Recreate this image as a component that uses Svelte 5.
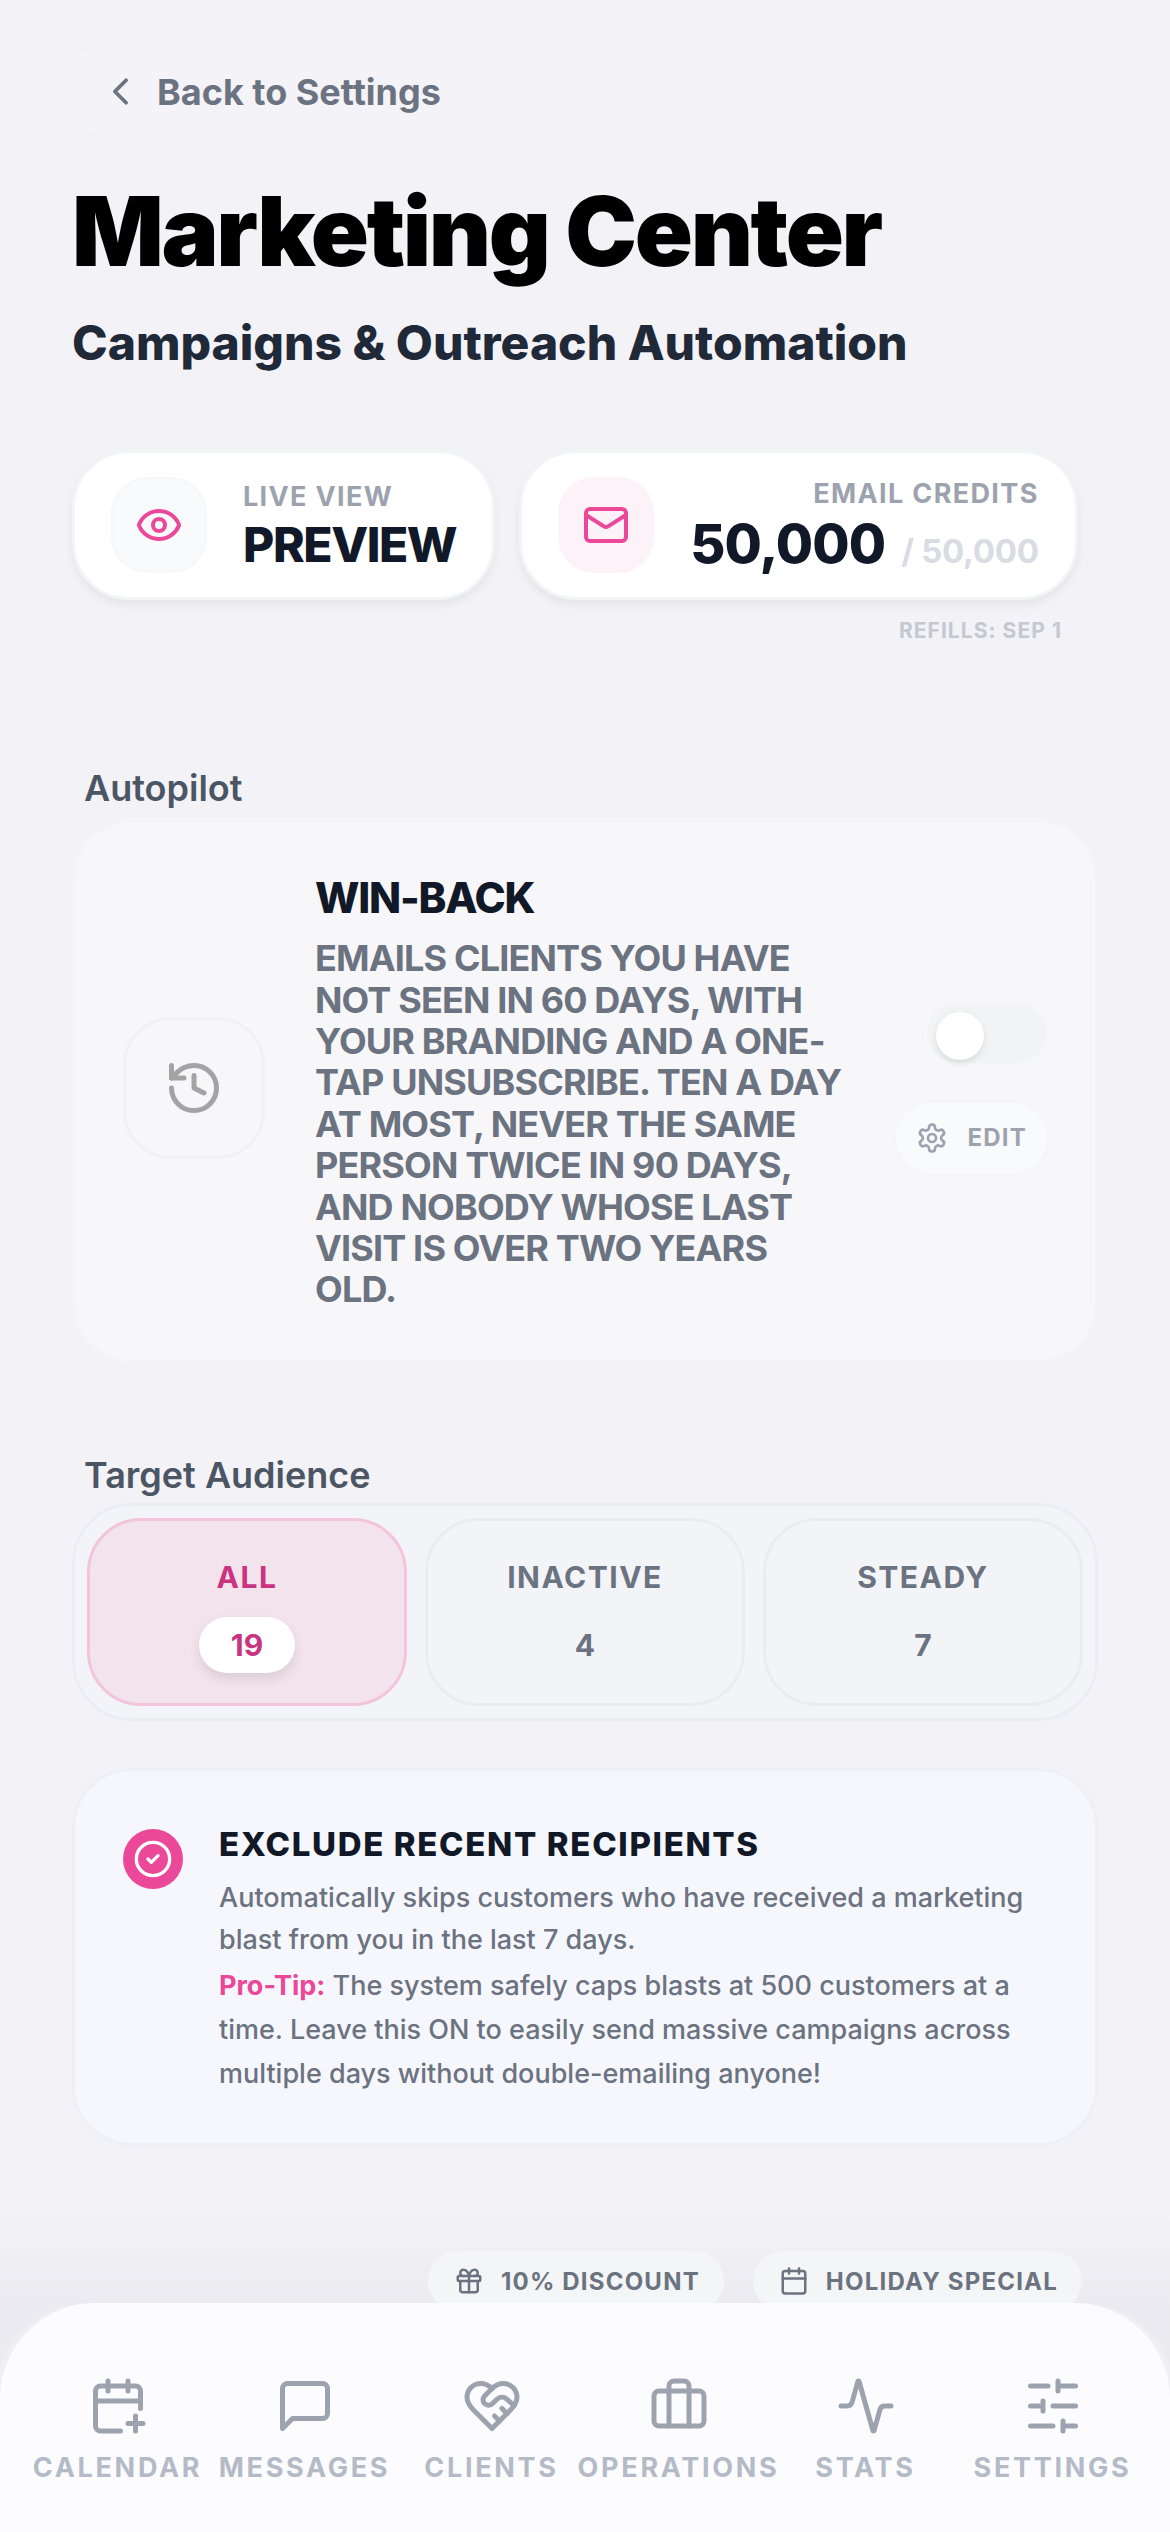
<script>
  const audience = [
    { label: 'ALL', count: 19, active: true },
    { label: 'INACTIVE', count: 4 },
    { label: 'STEADY', count: 7 }
  ];
  const nav = ['CALENDAR', 'MESSAGES', 'CLIENTS', 'OPERATIONS', 'STATS', 'SETTINGS'];
</script>

<div class="page">
  <button class="back" type="button">
    <svg viewBox="0 0 24 24" class="ico back-ico"><path d="m15 18-6-6 6-6" /></svg>
    <span>Back to Settings</span>
  </button>

  <h1>Marketing Center</h1>
  <p class="subtitle">Campaigns &amp; Outreach Automation</p>

  <div class="stats">
    <div class="stat">
      <div class="tile">
        <svg viewBox="0 0 24 24" class="ico pink">
          <path d="M2.062 12.348a1 1 0 0 1 0-.696 10.75 10.75 0 0 1 19.876 0 1 1 0 0 1 0 .696 10.75 10.75 0 0 1-19.876 0" />
          <circle cx="12" cy="12" r="3" />
        </svg>
      </div>
      <div class="stat-text">
        <span class="stat-label">LIVE VIEW</span>
        <strong class="stat-value">PREVIEW</strong>
      </div>
    </div>
    <div class="stat">
      <div class="tile tile-pink">
        <svg viewBox="0 0 24 24" class="ico pink">
          <rect x="2" y="4" width="20" height="16" rx="2" />
          <path d="m22 7-8.97 5.7a1.94 1.94 0 0 1-2.06 0L2 7" />
        </svg>
      </div>
      <div class="stat-text right">
        <span class="stat-label">EMAIL CREDITS</span>
        <div class="credits"><strong>50,000</strong><span>/ 50,000</span></div>
      </div>
    </div>
  </div>
  <p class="refills">REFILLS: SEP 1</p>

  <h2 class="autopilot-head">Autopilot</h2>
  <section class="auto">
    <div class="auto-icon">
      <svg viewBox="0 0 24 24" class="ico">
        <path d="M3 12a9 9 0 1 0 9-9 9.75 9.75 0 0 0-6.74 2.74L3 8" />
        <path d="M3 3v5h5" />
        <path d="M12 7v5l4 2" />
      </svg>
    </div>
    <div class="auto-text">
      <h3>WIN-BACK</h3>
      <p>Emails clients you have not seen in 60 days, with your branding and a one-tap unsubscribe. Ten a day at most, never the same person twice in 90 days, and nobody whose last visit is over two years old.</p>
    </div>
    <div class="auto-side">
      <div class="toggle"><span class="knob"></span></div>
      <button class="edit" type="button">
        <svg viewBox="0 0 24 24" class="ico">
          <path d="M12.22 2h-.44a2 2 0 0 0-2 2v.18a2 2 0 0 1-1 1.73l-.43.25a2 2 0 0 1-2 0l-.15-.08a2 2 0 0 0-2.73.73l-.22.38a2 2 0 0 0 .73 2.73l.15.1a2 2 0 0 1 1 1.72v.51a2 2 0 0 1-1 1.74l-.15.09a2 2 0 0 0-.73 2.73l.22.38a2 2 0 0 0 2.73.73l.15-.08a2 2 0 0 1 2 0l.43.25a2 2 0 0 1 1 1.73V20a2 2 0 0 0 2 2h.44a2 2 0 0 0 2-2v-.18a2 2 0 0 1 1-1.73l.43-.25a2 2 0 0 1 2 0l.15.08a2 2 0 0 0 2.73-.73l.22-.39a2 2 0 0 0-.73-2.73l-.15-.08a2 2 0 0 1-1-1.74v-.5a2 2 0 0 1 1-1.74l.15-.09a2 2 0 0 0 .73-2.73l-.22-.38a2 2 0 0 0-2.73-.73l-.15.08a2 2 0 0 1-2 0l-.43-.25a2 2 0 0 1-1-1.73V4a2 2 0 0 0-2-2z" />
          <circle cx="12" cy="12" r="3" />
        </svg>
        <span>EDIT</span>
      </button>
    </div>
  </section>

  <h2 class="audience-head">Target Audience</h2>
  <div class="segments">
    {#each audience as a}
      <div class="segment" class:active={a.active}>
        <span class="seg-label">{a.label}</span>
        <span class="seg-count">{a.count}</span>
      </div>
    {/each}
  </div>

  <section class="exclude">
    <div class="check">
      <svg viewBox="0 0 24 24" class="ico">
        <circle cx="12" cy="12" r="10" />
        <path d="m9 12 2 2 4-4" />
      </svg>
    </div>
    <div class="exclude-text">
      <h3>EXCLUDE RECENT RECIPIENTS</h3>
      <p>Automatically skips customers who have received a marketing blast from you in the last 7 days.</p>
      <p class="tip"><b>Pro-Tip:</b> The system safely caps blasts at 500 customers at a time. Leave this ON to easily send massive campaigns across multiple days without double-emailing anyone!</p>
    </div>
  </section>

  <div class="fade"></div>

  <div class="chips">
    <span class="chip">
      <svg viewBox="0 0 24 24" class="ico">
        <rect x="3" y="8" width="18" height="4" rx="1" />
        <path d="M12 8v13" />
        <path d="M19 12v7a2 2 0 0 1-2 2H7a2 2 0 0 1-2-2v-7" />
        <path d="M7.5 8a2.5 2.5 0 0 1 0-5A4.8 8 0 0 1 12 8a4.8 8 0 0 1 4.5-5 2.5 2.5 0 0 1 0 5" />
      </svg>
      10% DISCOUNT
    </span>
    <span class="chip">
      <svg viewBox="0 0 24 24" class="ico">
        <path d="M8 2v4" /><path d="M16 2v4" />
        <rect x="3" y="4" width="18" height="18" rx="2" />
        <path d="M3 10h18" />
      </svg>
      HOLIDAY SPECIAL
    </span>
  </div>

  <nav class="tabbar">
    {#each nav as label, i}
      <div class="tab">
        <svg viewBox="0 0 24 24" class="ico">
          {#if i === 0}
            <path d="M8 2v4" /><path d="M16 2v4" />
            <path d="M21 13V6a2 2 0 0 0-2-2H5a2 2 0 0 0-2 2v14a2 2 0 0 0 2 2h8" />
            <path d="M3 10h18" /><path d="M16 19h6" /><path d="M19 16v6" />
          {:else if i === 1}
            <path d="M21 15a2 2 0 0 1-2 2H7l-4 4V5a2 2 0 0 1 2-2h14a2 2 0 0 1 2 2z" />
          {:else if i === 2}
            <path d="M19 14c1.49-1.46 3-3.21 3-5.5A5.5 5.5 0 0 0 16.5 3c-1.76 0-3 .5-4.5 2-1.5-1.5-2.74-2-4.5-2A5.5 5.5 0 0 0 2 8.5c0 2.3 1.5 4.05 3 5.5l7 7Z" />
            <path d="M12 5 9.04 7.96a2.17 2.17 0 0 0 0 3.08c.82.82 2.13.85 3 .07l2.07-1.9a2.82 2.82 0 0 1 3.79 0l2.96 2.66" />
            <path d="m18 15-2-2" /><path d="m15 18-2-2" />
          {:else if i === 3}
            <path d="M16 20V4a2 2 0 0 0-2-2h-4a2 2 0 0 0-2 2v16" />
            <rect x="2" y="6" width="20" height="14" rx="2" />
          {:else if i === 4}
            <path d="M22 12h-2.48a2 2 0 0 0-1.93 1.46l-2.35 8.36a.25.25 0 0 1-.48 0L9.24 2.18a.25.25 0 0 0-.48 0l-2.35 8.36A2 2 0 0 1 4.49 12H2" />
          {:else}
            <path d="M21 4h-7M10 4H3M21 12h-9M8 12H3M21 20h-5M12 20H3M14 2v4M8 10v4M16 18v4" />
          {/if}
        </svg>
        <span>{label}</span>
      </div>
    {/each}
  </nav>
</div>

<style>
  :global(body) {
    margin: 0;
    background: #f2f2f7;
  }
  .page {
    position: relative;
    width: 1170px;
    height: 2532px;
    overflow: hidden;
    box-sizing: border-box;
    padding: 48px 72px 0;
    background: #f2f2f7;
    font-family: Inter, 'Liberation Sans', sans-serif;
    color: #111827;
  }
  h1, h2, h3, p {
    margin: 0;
  }
  button {
    font-family: inherit;
    border: none;
    padding: 0;
  }
  .ico {
    fill: none;
    stroke: currentColor;
    stroke-width: 2;
    stroke-linecap: round;
    stroke-linejoin: round;
    display: block;
    flex: none;
  }
  .pink {
    width: 48px;
    height: 48px;
    color: #ec4899;
  }

  .back {
    display: flex;
    align-items: center;
    gap: 14px;
    height: 84px;
    padding: 3px 36px 0;
    margin-left: -10px;
    border-radius: 42px;
    background: #f3f3f8;
    color: #6b7280;
    font-size: 36px;
    font-weight: 700;
  }
  .back-ico {
    width: 45px;
    height: 45px;
    color: #6b7280;
  }
  h1 {
    margin-top: 45px;
    font-size: 96px;
    line-height: 108px;
    font-weight: 900;
    letter-spacing: -2.35px;
    color: #000;
  }
  .subtitle {
    margin-top: 28px;
    font-size: 48px;
    line-height: 60px;
    font-weight: 800;
    color: #1f2937;
  }

  .stats {
    display: flex;
    gap: 24px;
    margin-top: 77px;
  }
  .stat {
    display: flex;
    align-items: center;
    height: 150px;
    box-sizing: border-box;
    padding: 0 36px;
    border-radius: 57px;
    background: #fff;
    border: 3px solid #f3f4f6;
    box-shadow: 0 5px 8px rgba(0, 0, 0, 0.06);
  }
  .tile {
    width: 96px;
    height: 96px;
    border-radius: 36px;
    background: #f9fafb;
    box-shadow: inset 0 0 6px rgba(0, 0, 0, 0.03);
    display: flex;
    align-items: center;
    justify-content: center;
    flex: none;
  }
  .tile-pink {
    background: #fdf2f8;
    box-shadow: none;
  }
  .stat-text {
    display: flex;
    flex-direction: column;
    margin-left: 36px;
  }
  .stat-text.right {
    align-items: flex-end;
  }
  .stat-label {
    font-size: 27px;
    line-height: 36px;
    font-weight: 700;
    letter-spacing: 1.35px;
    color: #9ca3af;
  }
  .stat-value {
    margin-top: 3px;
    font-size: 48px;
    line-height: 54px;
    font-weight: 800;
    letter-spacing: -1.4px;
    color: #111827;
  }
  .credits {
    display: flex;
    align-items: baseline;
    gap: 16px;
    margin-top: 2px;
  }
  .credits strong {
    font-size: 54px;
    line-height: 60px;
    font-weight: 800;
    letter-spacing: -0.9px;
  }
  .credits span {
    font-size: 33px;
    font-weight: 700;
    letter-spacing: -0.3px;
    color: #d9dce3;
  }
  .refills {
    margin-top: 16px;
    width: 990px;
    text-align: right;
    font-size: 21px;
    line-height: 30px;
    font-weight: 700;
    letter-spacing: 1.05px;
    color: #c4c8d0;
  }

  h2 {
    margin-left: 12px;
    font-size: 36px;
    line-height: 48px;
    font-weight: 600;
    color: #4b5563;
  }
  .autopilot-head {
    margin-top: 118px;
  }
  .auto {
    display: flex;
    align-items: center;
    margin-top: 7px;
    height: 544px;
    box-sizing: border-box;
    padding: 0 48px;
    border-radius: 60px;
    background: #f7f7fa;
    border: 3px solid #f4f4f8;
  }
  .auto-icon {
    width: 142px;
    height: 142px;
    margin-bottom: 6px;
    box-sizing: border-box;
    border-radius: 48px;
    border: 3px solid #f1f1f4;
    background: #f7f7fa;
    color: #a3a3a3;
    display: flex;
    align-items: center;
    justify-content: center;
    flex: none;
  }
  .auto-icon svg {
    width: 60px;
    height: 60px;
  }
  .auto-text {
    width: 530px;
    margin-left: 50px;
    flex: none;
  }
  .auto-text h3 {
    font-size: 42px;
    line-height: 54px;
    font-weight: 800;
    letter-spacing: -1.2px;
    color: #111827;
  }
  .auto-text p {
    margin-top: 13px;
    font-size: 36px;
    line-height: 41.4px;
    font-weight: 700;
    letter-spacing: -0.85px;
    text-transform: uppercase;
    color: #6b7280;
  }
  .auto-side {
    margin-left: auto;
    margin-bottom: 6px;
    display: flex;
    flex-direction: column;
    align-items: flex-end;
    gap: 39px;
  }
  .toggle {
    position: relative;
    width: 120px;
    height: 60px;
    border-radius: 30px;
    background: #f2f3f5;
  }
  .knob {
    position: absolute;
    left: 9px;
    top: 9px;
    width: 48px;
    height: 48px;
    border-radius: 50%;
    background: #fff;
    box-shadow: 0 3px 6px rgba(0, 0, 0, 0.1);
  }
  .edit {
    display: flex;
    align-items: center;
    gap: 20px;
    height: 72px;
    padding: 0 20px;
    border-radius: 36px;
    background: #f9fafb;
    box-shadow: 0 0 0 2px #f5f5f8;
    color: #9ca3af;
    font-size: 24px;
    font-weight: 700;
    letter-spacing: 1.2px;
  }
  .edit svg {
    width: 32px;
    height: 32px;
  }

  .audience-head {
    margin-top: 88px;
  }
  .segments {
    display: flex;
    gap: 18px;
    margin-top: 4px;
    padding: 12px;
    height: 218px;
    box-sizing: border-box;
    border-radius: 60px;
    border: 3px solid #ecedf2;
    background: #f3f4f8;
  }
  .segment {
    flex: 1;
    box-sizing: border-box;
    border-radius: 54px;
    border: 3px solid #ebecf0;
    display: flex;
    flex-direction: column;
    align-items: center;
    color: #6b7280;
  }
  .segment.active {
    background: #f3e3ed;
    border-color: #f2c5dc;
    color: #c9337f;
  }
  .seg-label {
    margin-top: 35px;
    font-size: 30px;
    line-height: 42px;
    font-weight: 700;
    letter-spacing: 1.5px;
  }
  .seg-count {
    margin-top: 19px;
    min-width: 36px;
    height: 56px;
    padding: 0 30px;
    border-radius: 28px;
    display: flex;
    align-items: center;
    justify-content: center;
    font-size: 30px;
    font-weight: 700;
  }
  .active .seg-count {
    background: #fff;
    box-shadow: 0 6px 12px rgba(0, 0, 0, 0.1);
  }

  .exclude {
    display: flex;
    gap: 36px;
    margin-top: 47px;
    height: 378px;
    box-sizing: border-box;
    padding: 52px 48px 0;
    border-radius: 60px;
    border: 3px solid #eff0f5;
    background: #f6f7fc;
  }
  .check {
    width: 60px;
    height: 60px;
    border-radius: 50%;
    background: #ec4899;
    color: #fff;
    display: flex;
    align-items: center;
    justify-content: center;
    flex: none;
    margin-top: 6px;
  }
  .check svg {
    width: 40px;
    height: 40px;
  }
  .exclude-text h3 {
    font-size: 33px;
    line-height: 42px;
    font-weight: 800;
    letter-spacing: 1.65px;
    color: #111827;
  }
  .exclude-text p {
    margin-top: 12px;
    font-size: 27px;
    line-height: 42px;
    font-weight: 500;
    color: #6b7280;
  }
  .exclude-text p.tip {
    margin-top: 3px;
    line-height: 44px;
  }
  .tip b {
    font-weight: 700;
    color: #ec4899;
  }

  .chips {
    position: relative;
    display: flex;
    justify-content: flex-end;
    gap: 29px;
    margin: 105px 16px 0 0;
  }
  .chip {
    display: flex;
    align-items: center;
    gap: 17px;
    height: 60px;
    padding: 0 24px 0 26px;
    border-radius: 30px;
    background: #f4f5f7;
    color: #6b7280;
    font-size: 24px;
    font-weight: 700;
    letter-spacing: 1.2px;
  }
  .chip svg {
    width: 30px;
    height: 30px;
  }

  .fade {
    position: absolute;
    left: 0;
    right: 0;
    top: 2215px;
    bottom: 0;
    background: linear-gradient(to bottom, rgba(40, 40, 50, 0), rgba(40, 40, 50, 0.035) 88px);
    pointer-events: none;
  }
  .tabbar {
    position: absolute;
    left: 0;
    right: 0;
    top: 2303px;
    bottom: 0;
    box-sizing: border-box;
    padding: 73px 24px 0;
    display: grid;
    grid-template-columns: repeat(6, minmax(0, 1fr));
    align-items: start;
    border-radius: 96px 96px 0 0;
    background: #fcfcff;
    box-shadow: -6px 0 0 rgba(255, 255, 255, 0.25), 6px 0 0 rgba(255, 255, 255, 0.25);
  }
  .tab {
    display: flex;
    flex-direction: column;
    align-items: center;
    gap: 14px;
    color: #9ca3af;
  }
  .tab svg {
    width: 60px;
    height: 60px;
  }
  .tab span {
    font-size: 27px;
    line-height: 36px;
    font-weight: 700;
    letter-spacing: 2.7px;
    color: #b4bac6;
    white-space: nowrap;
  }
</style>
